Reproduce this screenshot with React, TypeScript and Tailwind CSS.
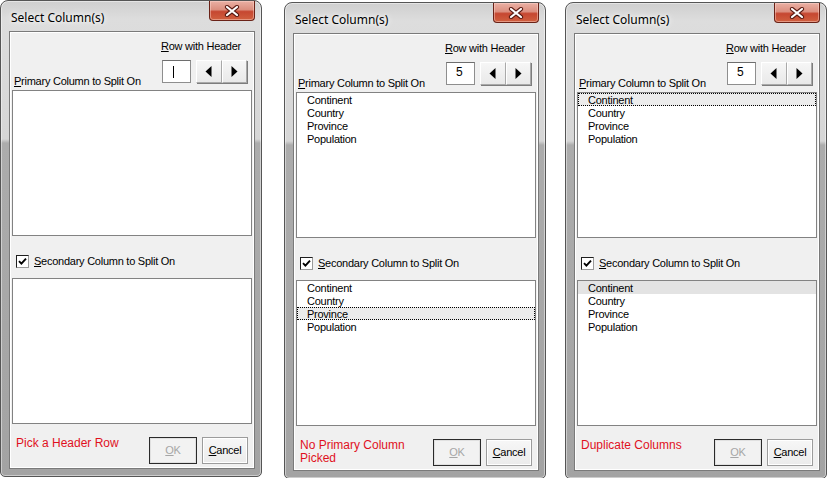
import React from "react";

type Sel = { index: number; kind: "focus" | "sel" } | null;

const ITEMS = ["Continent", "Country", "Province", "Population"];

function CloseBtn() {
  return (
    <div className="flex h-[20px] w-[46px] items-center justify-center rounded-b-[4px] border border-t-0 border-[#6a2217] bg-[linear-gradient(180deg,#eab0a4_0%,#dc8f7f_45%,#c64731_56%,#d0603f_100%)] shadow-[inset_0_0_0_1px_rgba(255,220,210,0.45)]">
      <svg width="16" height="12" viewBox="0 0 16 12">
        <path d="M3 2 L13 10 M13 2 L3 10" stroke="#5a1a12" strokeWidth="4.2" strokeLinecap="round" />
        <path d="M3 2 L13 10 M13 2 L3 10" stroke="#ffffff" strokeWidth="2.2" strokeLinecap="round" />
      </svg>
    </div>
  );
}

function ListBox({ items, sel }: { items: string[]; sel: Sel }) {
  return (
    <div className="mx-[2px] h-[146px] border border-[#828282] bg-white">
      {items.map((it, i) => {
        let cls = "border border-transparent";
        if (sel && sel.index === i) {
          cls =
            sel.kind === "focus"
              ? "border border-dotted border-black bg-[#ececec]"
              : "border border-transparent bg-[#e3e3e3]";
        }
        return (
          <div key={it} className={`h-[13px] pl-[9px] text-[11px] leading-[12px] text-black ${cls}`}>
            {it}
          </div>
        );
      })}
    </div>
  );
}

function Win({
  className,
  list1,
  sel1,
  list2,
  sel2,
  value,
  message,
}: {
  className: string;
  list1: string[];
  sel1: Sel;
  list2: string[];
  sel2: Sel;
  value: string | null;
  message: string;
}) {
  return (
    <div
      className={`flex h-[477px] w-[262px] shrink-0 flex-col rounded-t-[8px] rounded-b-[5px] border border-[#555555] bg-[linear-gradient(180deg,#cfcfcf_0px,#dddddd_18px,#d6d6d6_138px,#acacac_142px,#a3a3a3_100%)] shadow-[inset_0_0_0_1px_rgba(255,255,255,0.45)] ${className}`}
    >
      <div className="flex h-[30px] items-start justify-between pl-[10px] pr-[6px]">
        <span className="mt-[9px] font-['Noto_Sans',sans-serif] text-[12px] leading-[16px] text-black [text-shadow:0_0_8px_#ffffff,0_0_4px_#ffffff]">
          Select Column(s)
        </span>
        <CloseBtn />
      </div>
      <div className="mb-[7px] ml-[8px] mr-[6px] flex flex-1 flex-col border border-[#7a7a7a] bg-[#f0f0f0] font-['Liberation_Sans',Arial,sans-serif] text-[11px] leading-[13px] tracking-[-0.25px] text-black shadow-[inset_0_0_0_1px_#ffffff]">
        {/* header */}
        <div className="flex h-[58px] justify-between pl-[4px] pr-[7px]">
          <span className="mb-[2px] self-end leading-[13px]">
            <span className="underline underline-offset-1">P</span>rimary Column to Split On
          </span>
          <div className="flex flex-col items-start pt-[8px]">
            <span className="-ml-[1px] leading-[13px]">
              <span className="underline underline-offset-1">R</span>ow with Header
            </span>
            <div className="mt-[7px] flex gap-[5px]">
              <div className="flex h-[23px] w-[29px] items-center border border-[#8e8e8e] border-t-[#6e6e6e] bg-white pl-[9px] text-[12px]">
                {value === null ? (
                  <span className="ml-[1px] block h-[12px] w-px bg-black" />
                ) : (
                  <span className="-mt-[2px]">{value}</span>
                )}
              </div>
              <div className="flex h-[23px] w-[51px]">
                {[0, 1].map((d) => (
                  <div
                    key={d}
                    className="flex h-full flex-1 items-center justify-center border border-[#a9a9a9] border-l-white border-t-white bg-[linear-gradient(180deg,#f6f6f6,#e9e9e9)] shadow-[1px_1px_0_#7d7d7d]"
                  >
                    <svg width="7" height="11" viewBox="0 0 7 11">
                      {d === 0 ? (
                        <path d="M6.5 0 L0.5 5.5 L6.5 11 Z" fill="#000" />
                      ) : (
                        <path d="M0.5 0 L6.5 5.5 L0.5 11 Z" fill="#000" />
                      )}
                    </svg>
                  </div>
                ))}
              </div>
            </div>
          </div>
        </div>
        <ListBox items={list1} sel={sel1} />
        {/* checkbox */}
        <div className="flex h-[42px] items-start gap-[5px] pl-[6px] pt-[19px]">
          <div className="flex h-[13px] w-[13px] items-center justify-center border border-[#1e1e1e] border-b-[#9a9a9a] border-r-[#9a9a9a] bg-white">
            <svg width="9" height="9" viewBox="0 0 9 9">
              <path d="M1 4.2 L3.4 6.6 L8 1.6" stroke="#000" strokeWidth="1.9" fill="none" />
            </svg>
          </div>
          <span className="leading-[13px]">
            <span className="underline underline-offset-1">S</span>econdary Column to Split On
          </span>
        </div>
        <ListBox items={list2} sel={sel2} />
        {/* bottom */}
        <div className="flex flex-1 items-start pl-[6px] pr-[6px] pt-[13px]">
          <div className="flex-1 pr-[4px] text-[12px] leading-[13px] tracking-normal text-[#e0101e]">{message}</div>
          <div className="flex h-[27px] w-[48px] items-center justify-center border border-[#2a2a2a] bg-[#f2f2f2] text-[#a6a6a6] shadow-[inset_0_0_0_1px_#e0e0e0]">
            <span>
              <span className="underline underline-offset-1">O</span>K
            </span>
          </div>
          <div className="ml-[5px] flex h-[27px] w-[46px] items-center justify-center border border-[#9c9c9c] bg-[linear-gradient(180deg,#f7f7f7,#ebebeb)] shadow-[inset_0_0_0_1px_#ffffff]">
            <span>
              <span className="underline underline-offset-1">C</span>ancel
            </span>
          </div>
        </div>
      </div>
    </div>
  );
}

export default function App() {
  return (
    <div className="flex h-[478px] w-[830px] items-start overflow-hidden bg-white">
      <Win className="" list1={[]} sel1={null} list2={[]} sel2={null} value={null} message="Pick a Header Row" />
      <Win
        className="ml-[22px] mt-[2px]"
        list1={ITEMS}
        sel1={null}
        list2={ITEMS}
        sel2={{ index: 2, kind: "focus" }}
        value="5"
        message="No Primary Column Picked"
      />
      <Win
        className="ml-[19px] mt-[2px]"
        list1={ITEMS}
        sel1={{ index: 0, kind: "focus" }}
        list2={ITEMS}
        sel2={{ index: 0, kind: "sel" }}
        value="5"
        message="Duplicate Columns"
      />
    </div>
  );
}
